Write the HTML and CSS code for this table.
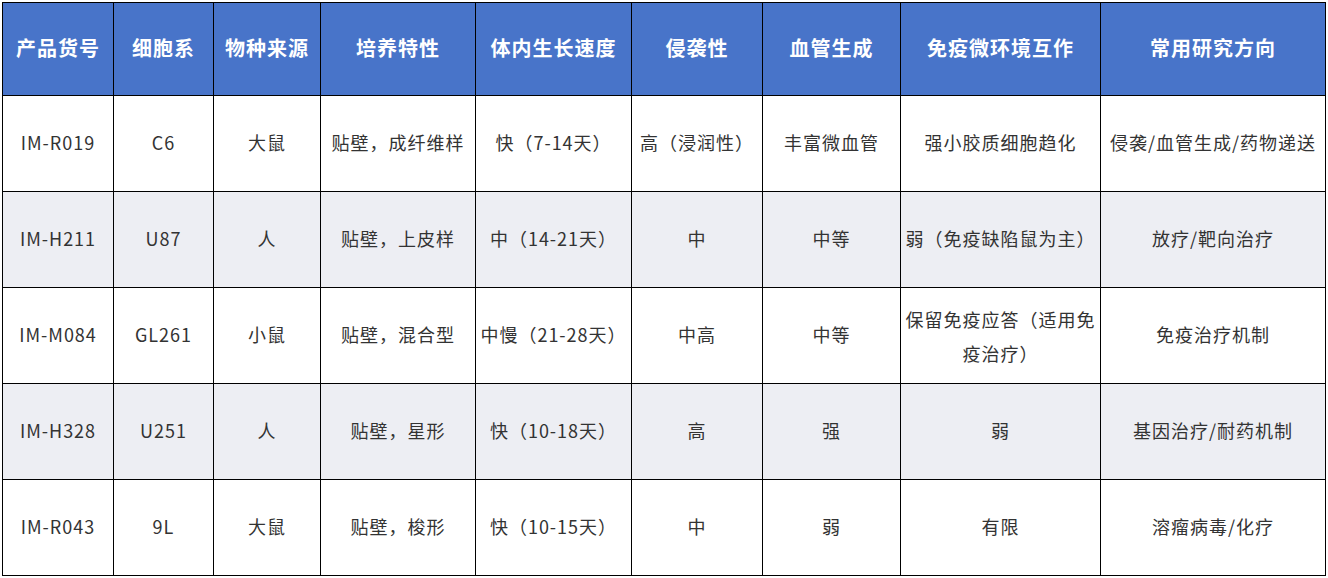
FILE: index.html
```html
<!DOCTYPE html>
<html lang="zh-CN">
<head>
<meta charset="utf-8">
<title>细胞系对比</title>
<link rel="stylesheet" href="styles.css">
</head>
<body>
<table class="cells">
  <colgroup>
    <col class="c1"><col class="c2"><col class="c3"><col class="c4"><col class="c5">
    <col class="c6"><col class="c7"><col class="c8"><col class="c9">
  </colgroup>
  <thead>
    <tr>
      <th>产品货号</th><th>细胞系</th><th>物种来源</th><th>培养特性</th><th>体内生长速度</th>
      <th>侵袭性</th><th>血管生成</th><th>免疫微环境互作</th><th>常用研究方向</th>
    </tr>
  </thead>
  <tbody>
    <tr>
      <td>IM-R019</td><td>C6</td><td>大鼠</td><td>贴壁，成纤维样</td><td>快（7-14天）</td>
      <td>高（浸润性）</td><td>丰富微血管</td><td>强小胶质细胞趋化</td><td>侵袭/血管生成/药物递送</td>
    </tr>
    <tr class="alt">
      <td>IM-H211</td><td>U87</td><td>人</td><td>贴壁，上皮样</td><td>中（14-21天）</td>
      <td>中</td><td>中等</td><td>弱（免疫缺陷鼠为主）</td><td>放疗/靶向治疗</td>
    </tr>
    <tr>
      <td>IM-M084</td><td>GL261</td><td>小鼠</td><td>贴壁，混合型</td><td>中慢（21-28天）</td>
      <td>中高</td><td>中等</td><td class="wrap">保留免疫应答（适用免疫治疗）</td><td>免疫治疗机制</td>
    </tr>
    <tr class="alt">
      <td>IM-H328</td><td>U251</td><td>人</td><td>贴壁，星形</td><td>快（10-18天）</td>
      <td>高</td><td>强</td><td>弱</td><td>基因治疗/耐药机制</td>
    </tr>
    <tr>
      <td>IM-R043</td><td>9L</td><td>大鼠</td><td>贴壁，梭形</td><td>快（10-15天）</td>
      <td>中</td><td>弱</td><td>有限</td><td>溶瘤病毒/化疗</td>
    </tr>
  </tbody>
</table>
</body>
</html>
```

FILE: styles.css
```css
html, body {
  margin: 0;
  padding: 0;
  background: #ffffff;
}
body {
  padding: 2px 0 0 2px;
  font-family: "Noto Sans CJK SC", "Noto Sans", sans-serif;
}
.cells {
  border-collapse: collapse;
  table-layout: fixed;
  width: 1324px;
}
.c1 { width: 111px; }
.c2 { width: 100px; }
.c3 { width: 107px; }
.c4 { width: 155px; }
.c5 { width: 156px; }
.c6 { width: 131px; }
.c7 { width: 138px; }
.c8 { width: 200px; }
.c9 { width: 225px; }
.cells th,
.cells td {
  border: 1px solid #000000;
  text-align: center;
  vertical-align: middle;
  padding: 0 4px;
  letter-spacing: 1px;
  line-height: 34px;
}
.cells th {
  background: #4874c9;
  color: #ffffff;
  font-size: 20px;
  font-weight: 700;
  height: 90px;
  padding-bottom: 2px;
}
.cells td {
  color: #333333;
  font-size: 18px;
  font-weight: 400;
  height: 91px;
  padding-bottom: 4px;
}
.cells td.wrap {
  padding-bottom: 0;
  height: 95px;
}
.cells tr.alt td {
  background: #edeef3;
}
```
